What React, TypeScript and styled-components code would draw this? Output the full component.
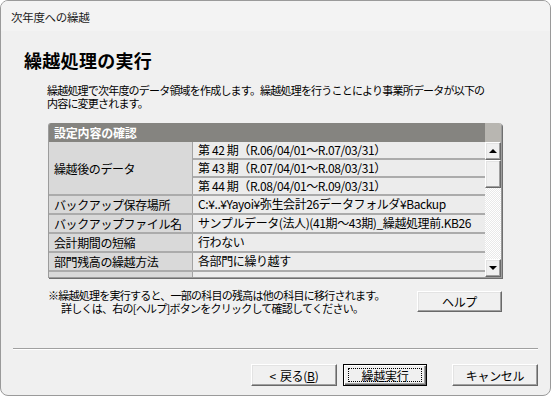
import * as React from 'react'
import styled, { createGlobalStyle, css } from 'styled-components'

const GlobalStyle = createGlobalStyle`
  html, body {
    margin: 0;
    padding: 0;
    background: #ffffff;
  }
  body {
    font-family: "Noto Sans CJK JP", "Noto Sans", sans-serif;
    color: #000;
  }
`

const FONT = `"Noto Sans CJK JP", "Noto Sans", sans-serif`

const Window = styled.div`
  box-sizing: border-box;
  width: 551px;
  height: 396px;
  border: 1px solid #9a9a9a;
  border-radius: 8px;
  background: #f0f0f0;
  overflow: hidden;
  display: flex;
  flex-direction: column;
  font-family: ${FONT};
`

const TitleBar = styled.div`
  height: 30px;
  flex: none;
  display: flex;
  align-items: center;
  padding: 1px 0 0 10px;
  box-sizing: border-box;
  background: #f3f3f3;
  font-size: 11.5px;
  color: #1b1b1b;
  letter-spacing: -0.3px;
`

const Content = styled.div`
  flex: 1;
  display: flex;
  flex-direction: column;
  padding: 0 12px 9px 12px;
`

const Heading = styled.h1`
  margin: 17px 0 0 11px;
  font-size: 18px;
  line-height: 24px;
  font-weight: bold;
  letter-spacing: 0.3px;
`

const Description = styled.p`
  margin: 12px 0 0 34px;
  font-size: 11px;
  line-height: 12.5px;
  letter-spacing: -0.8px;
  white-space: nowrap;
`

const Frame = styled.div`
  margin: 14px 0 0 35px;
  width: 454px;
  box-sizing: border-box;
  border: 1px solid #9c9c9c;
  border-top: none;
  border-top-left-radius: 3px;
  border-top-right-radius: 3px;
  box-shadow: 1px 1px 0 #6f6f6f;
  display: flex;
  flex-direction: column;
  overflow: hidden;
`

const FrameHeader = styled.div`
  display: flex;
  height: 19px;
`

const HeaderTitle = styled.div`
  flex: 1;
  background: #858480;
  color: #fff;
  font-size: 12px;
  font-weight: bold;
  line-height: 19px;
  padding-left: 5px;
  letter-spacing: -0.2px;
`

const HeaderCorner = styled.div`
  width: 16px;
  background: #b8b6b1;
`

const FrameBody = styled.div`
  display: flex;
  height: 135px;
`

const Rows = styled.div`
  flex: 1;
  display: flex;
  flex-direction: column;
  background: #ececec;
  overflow: hidden;
`

const Row = styled.div<{ $empty?: boolean }>`
  display: flex;
  height: ${p => (p.$empty ? '9px' : 'auto')};
  border-bottom: ${p => (p.$empty ? 'none' : '2px solid #ababab')};
  ${p => p.$empty && css`flex: 1;`}
`

const LabelCell = styled.div`
  width: 144px;
  flex: none;
  box-sizing: border-box;
  background: #d9d9d9;
  border-right: 1px solid #a3a3a3;
  display: flex;
  align-items: center;
  padding-left: 5px;
  font-size: 12px;
  letter-spacing: -0.4px;
  white-space: nowrap;
`

const ValueStack = styled.div`
  flex: 1;
  display: flex;
  flex-direction: column;
`

const ValueCell = styled.div<{ $divider?: boolean }>`
  height: ${p => (p.$divider ? '18px' : '16px')};
  box-sizing: border-box;
  border-bottom: ${p => (p.$divider ? '2px solid #ababab' : 'none')};
  display: flex;
  align-items: center;
  padding-left: 5px;
  font-size: 12px;
  line-height: 16px;
  letter-spacing: -0.4px;
  white-space: nowrap;
  background: #ececec;
`

const raised = css`
  box-sizing: border-box;
  background: #f0f0f0;
  border-top: 1px solid #ffffff;
  border-left: 1px solid #ffffff;
  border-right: 1px solid #696969;
  border-bottom: 1px solid #696969;
  box-shadow: inset -1px -1px 0 #a0a0a0, inset 1px 1px 0 #e3e3e3;
`

const ScrollBar = styled.div`
  width: 16px;
  flex: none;
  display: flex;
  flex-direction: column;
`

const ScrollButton = styled.div<{ $h: number }>`
  ${raised};
  height: ${p => p.$h}px;
  display: flex;
  align-items: center;
  justify-content: center;
`

const Arrow = styled.span<{ $down?: boolean }>`
  width: 0;
  height: 0;
  border-left: 4px solid transparent;
  border-right: 4px solid transparent;
  ${p =>
    p.$down
      ? css`border-top: 4px solid #000;`
      : css`border-bottom: 4px solid #000;`}
`

const Thumb = styled.div`
  ${raised};
  height: 28px;
`

const Track = styled.div`
  flex: 1;
  background-color: #f4f4f4;
  background-image: repeating-conic-gradient(#ffffff 0 25%, #e9e9e9 0 50%);
  background-size: 2px 2px;
`

const NoteRow = styled.div`
  display: flex;
  align-items: flex-start;
  margin-top: 11px;
`

const Note = styled.p`
  margin: 0 0 0 35px;
  font-size: 11px;
  line-height: 12.5px;
  letter-spacing: -0.75px;
  white-space: nowrap;
`

const NoteLine = styled.span<{ $indent?: boolean }>`
  display: block;
  padding-left: ${p => (p.$indent ? '13px' : '0')};
`

const Button = styled.button<{ $w: number; $default?: boolean }>`
  ${raised};
  width: ${p => p.$w}px;
  height: 22px;
  padding: 0;
  margin: 0;
  font-family: ${FONT};
  font-size: 12px;
  color: #000;
  letter-spacing: -0.3px;
  display: flex;
  align-items: center;
  justify-content: center;
  position: relative;
  white-space: pre;
  ${p =>
    p.$default &&
    css`
      border: 1px solid #000;
      box-shadow: inset 1px 1px 0 #ffffff, inset -1px -1px 0 #696969, inset -2px -2px 0 #a0a0a0;
    `}
`

const HelpButton = styled(Button)`
  margin: 2px 36px 0 auto;
  height: 21px;
`

const FocusRing = styled.span`
  position: absolute;
  inset: 3px 4px 3px 4px;
  border: 1px dotted #000;
  pointer-events: none;
`

const Separator = styled.div`
  margin-top: auto;
  height: 0;
  border-top: 1px solid #a0a0a0;
  border-bottom: 1px solid #ffffff;
`

const ButtonBar = styled.div`
  display: flex;
  justify-content: flex-end;
  margin-top: 14px;
`

const Gap = styled.div<{ $w: number }>`
  width: ${p => p.$w}px;
`

const Key = styled.span`
  text-decoration: underline;
`

const Chevron = styled.span`
  margin-right: 4px;
`

const periods = [
  '第 42 期（R.06/04/01～R.07/03/31）',
  '第 43 期（R.07/04/01～R.08/03/31）',
  '第 44 期（R.08/04/01～R.09/03/31）',
]

const settings: [string, string][] = [
  ['バックアップ保存場所', 'C:¥..¥Yayoi¥弥生会計26データフォルダ¥Backup'],
  ['バックアップファイル名', 'サンプルデータ(法人)(41期～43期)_繰越処理前.KB26'],
  ['会計期間の短縮', '行わない'],
  ['部門残高の繰越方法', '各部門に繰り越す'],
]

export default function App() {
  return (
    <>
      <GlobalStyle />
      <Window>
        <TitleBar>次年度への繰越</TitleBar>
        <Content>
          <Heading>繰越処理の実行</Heading>
          <Description>
            繰越処理で次年度のデータ領域を作成します。繰越処理を行うことにより事業所データが以下の
            <br />
            内容に変更されます。
          </Description>

          <Frame>
            <FrameHeader>
              <HeaderTitle>設定内容の確認</HeaderTitle>
              <HeaderCorner />
            </FrameHeader>
            <FrameBody>
              <Rows>
                <Row>
                  <LabelCell>繰越後のデータ</LabelCell>
                  <ValueStack>
                    {periods.map((p, i) => (
                      <ValueCell key={p} $divider={i < periods.length - 1}>
                        {p}
                      </ValueCell>
                    ))}
                  </ValueStack>
                </Row>
                {settings.map(([label, value]) => (
                  <Row key={label}>
                    <LabelCell>{label}</LabelCell>
                    <ValueStack>
                      <ValueCell>{value}</ValueCell>
                    </ValueStack>
                  </Row>
                ))}
                <Row $empty>
                  <LabelCell />
                  <ValueStack />
                </Row>
              </Rows>
              <ScrollBar>
                <ScrollButton $h={18}>
                  <Arrow />
                </ScrollButton>
                <Thumb />
                <Track />
                <ScrollButton $h={18}>
                  <Arrow $down />
                </ScrollButton>
              </ScrollBar>
            </FrameBody>
          </Frame>

          <NoteRow>
            <Note>
              <NoteLine>※繰越処理を実行すると、一部の科目の残高は他の科目に移行されます。</NoteLine>
              <NoteLine $indent>詳しくは、右の[ヘルプ]ボタンをクリックして確認してください。</NoteLine>
            </Note>
            <HelpButton $w={85}>ヘルプ</HelpButton>
          </NoteRow>

          <Separator />

          <ButtonBar>
            <Button $w={86}>
              <Chevron>&lt;</Chevron>戻る(<Key>B</Key>)
            </Button>
            <Gap $w={6} />
            <Button $w={84} $default>
              <FocusRing />
              繰越実行
            </Button>
            <Gap $w={25} />
            <Button $w={86}>キャンセル</Button>
          </ButtonBar>
        </Content>
      </Window>
    </>
  )
}
